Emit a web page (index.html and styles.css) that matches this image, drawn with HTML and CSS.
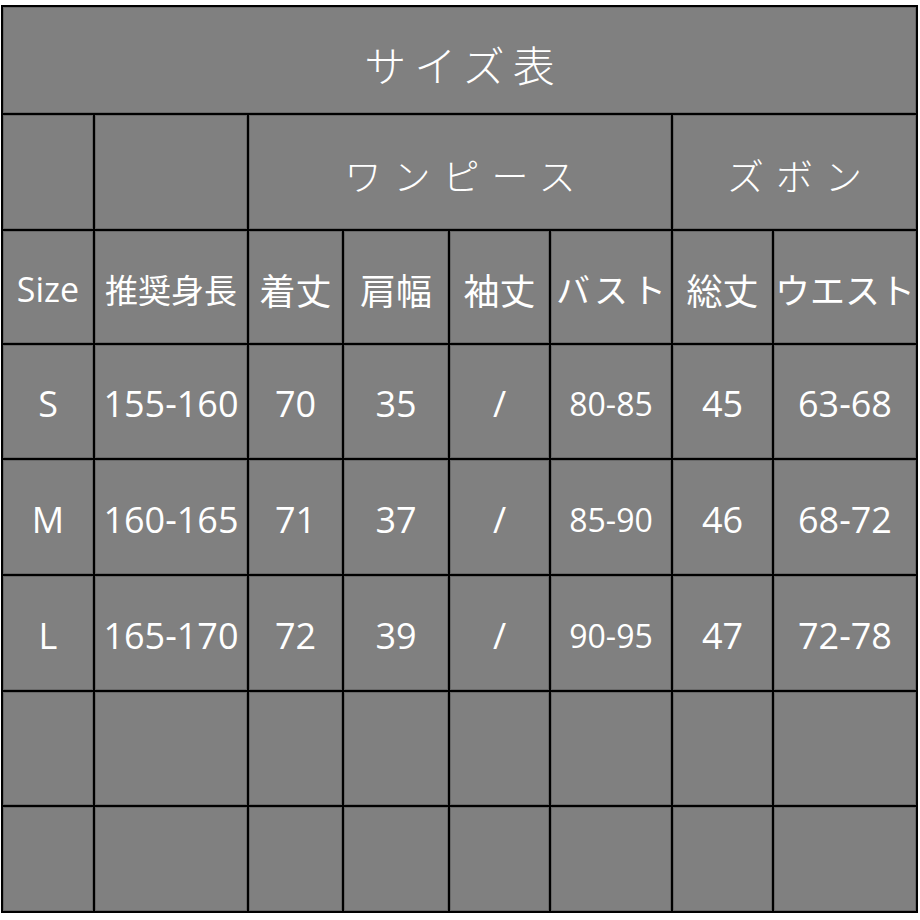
FILE: index.html
```html
<!DOCTYPE html>
<html lang="ja">
<head>
<meta charset="utf-8">
<title>サイズ表</title>
<link rel="stylesheet" href="styles.css">
</head>
<body>
<div class="chart">
  <div class="cell title">サイズ表</div>

  <div class="cell"></div>
  <div class="cell"></div>
  <div class="cell group span4">ワンピース</div>
  <div class="cell group span2">ズボン</div>

  <div class="cell latin head-size">Size</div>
  <div class="cell jp jp-small">推奨身長</div>
  <div class="cell jp">着丈</div>
  <div class="cell jp">肩幅</div>
  <div class="cell jp">袖丈</div>
  <div class="cell jp jp-bust">バスト</div>
  <div class="cell jp">総丈</div>
  <div class="cell jp jp-fill">ウエスト</div>

  <div class="cell num">S</div>
  <div class="cell num">155-160</div>
  <div class="cell num">70</div>
  <div class="cell num">35</div>
  <div class="cell num">/</div>
  <div class="cell num small">80-85</div>
  <div class="cell num">45</div>
  <div class="cell num">63-68</div>

  <div class="cell num">M</div>
  <div class="cell num">160-165</div>
  <div class="cell num">71</div>
  <div class="cell num">37</div>
  <div class="cell num">/</div>
  <div class="cell num small">85-90</div>
  <div class="cell num">46</div>
  <div class="cell num">68-72</div>

  <div class="cell num">L</div>
  <div class="cell num">165-170</div>
  <div class="cell num">72</div>
  <div class="cell num">39</div>
  <div class="cell num">/</div>
  <div class="cell num small">90-95</div>
  <div class="cell num">47</div>
  <div class="cell num">72-78</div>

  <div class="cell"></div><div class="cell"></div><div class="cell"></div><div class="cell"></div>
  <div class="cell"></div><div class="cell"></div><div class="cell"></div><div class="cell"></div>

  <div class="cell"></div><div class="cell"></div><div class="cell"></div><div class="cell"></div>
  <div class="cell"></div><div class="cell"></div><div class="cell"></div><div class="cell"></div>
</div>
</body>
</html>
```

FILE: styles.css
```css
html, body {
  margin: 0;
  padding: 0;
  background: #ffffff;
}

.chart {
  display: grid;
  grid-template-columns: 90px 152px 93px 104px 99px 120px 99px 142px;
  grid-template-rows: 106px 114px 112px 113px 114px 114px 113px 104px;
  gap: 2px;
  padding: 2px;
  background: #000000;
  width: max-content;
  margin: 5px 0 0 1px;
}

.cell {
  background: #808080;
  color: #ffffff;
  display: flex;
  align-items: center;
  justify-content: center;
  white-space: nowrap;
  overflow: hidden;
  box-shadow: inset 0 0 0 1px rgba(0, 0, 0, 0.18);
  font-family: "Noto Sans CJK JP", "Noto Sans", sans-serif;
}

.title {
  grid-column: 1 / -1;
  font-size: 42px;
  letter-spacing: 8px;
  padding-left: 8px;
  padding-top: 6px;
  font-weight: 300;
}

.group {
  font-size: 37px;
  letter-spacing: 12px;
  padding-left: 12px;
  padding-top: 5px;
  font-weight: 300;
}

.span4 { grid-column: span 4; }
.span2 { grid-column: span 2; }

.jp {
  font-size: 36px;
  padding-top: 3px;
}

.jp-small {
  font-size: 33px;
}

.jp-bust {
  font-size: 34px;
  letter-spacing: 4px;
  padding-left: 4px;
}

.jp-fill {
  font-size: 35px;
}

.latin,
.num {
  font-family: "Open Sans", "Liberation Sans", sans-serif;
}

.head-size {
  font-size: 34px;
  padding-top: 3px;
}

.num {
  font-size: 36px;
  padding-top: 4px;
}

.num.small {
  font-size: 32px;
}
```
